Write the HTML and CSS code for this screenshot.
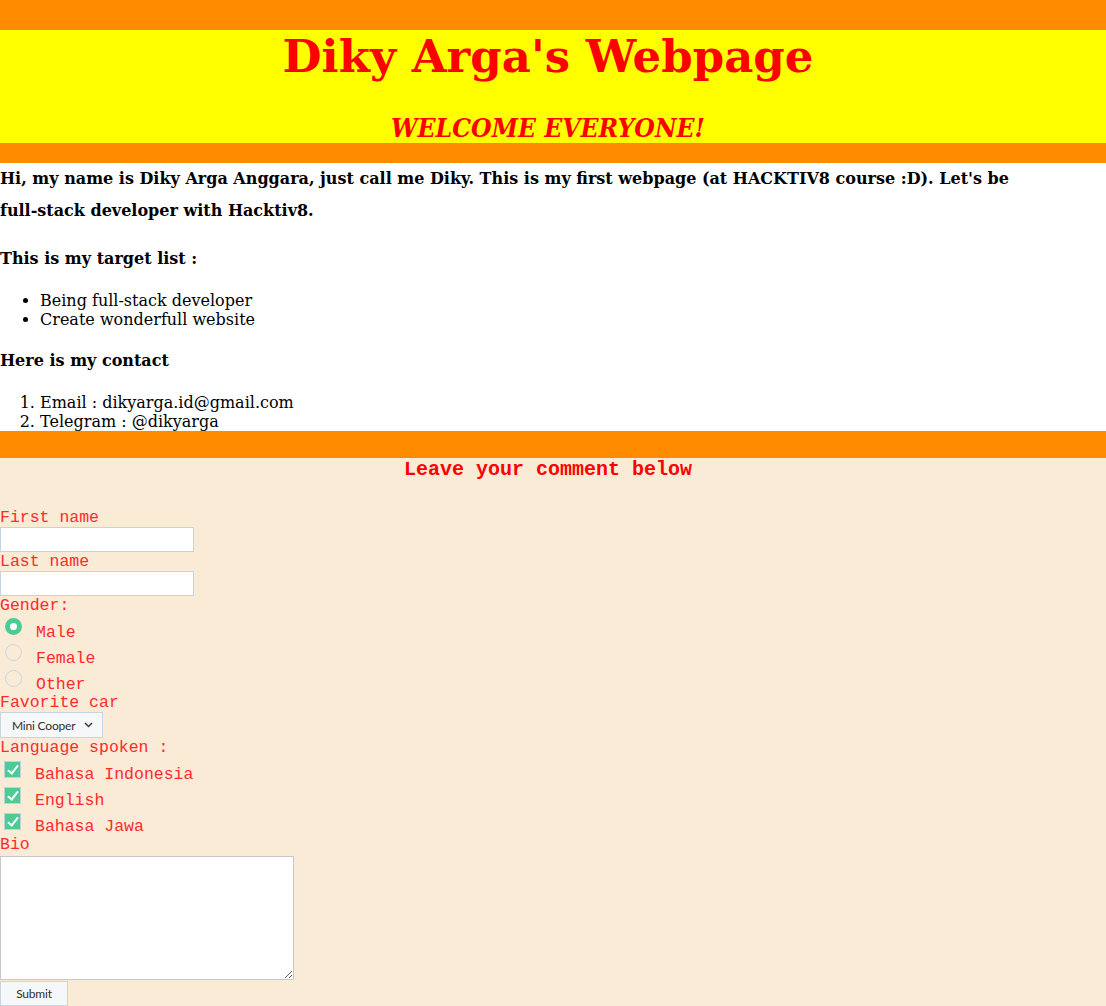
FILE: index.html
```html
<!DOCTYPE html>
<html lang="en">
<head>
<meta charset="utf-8">
<title>Diky Arga's Webpage</title>
<link rel="stylesheet" href="styles.css">
</head>
<body>
<header class="banner">
  <h1 class="title">Diky Arga's Webpage</h1>
  <h2 class="welcome">WELCOME EVERYONE!</h2>
</header>
<main class="about">
  <p class="intro">Hi, my name is Diky Arga Anggara, just call me Diky. This is my first webpage (at HACKTIV8 course :D). Let's be full-stack developer with Hacktiv8.</p>
  <h3 class="sub">This is my target list :</h3>
  <ul class="list">
    <li>Being full-stack developer</li>
    <li>Create wonderfull website</li>
  </ul>
  <h3 class="sub">Here is my contact</h3>
  <ol class="list last">
    <li>Email : dikyarga.id@gmail.com</li>
    <li>Telegram : @dikyarga</li>
  </ol>
</main>
<section class="comment">
  <h2 class="comment-title">Leave your comment below</h2>
  <form class="form">
    <label class="lbl" for="fname">First name</label>
    <input class="text" type="text" id="fname">
    <label class="lbl" for="lname">Last name</label>
    <input class="text" type="text" id="lname">
    <div class="lbl">Gender:</div>
    <label class="opt"><input class="radio" type="radio" name="g" checked><span class="opt-text">Male</span></label>
    <label class="opt"><input class="radio" type="radio" name="g"><span class="opt-text">Female</span></label>
    <label class="opt"><input class="radio" type="radio" name="g"><span class="opt-text">Other</span></label>
    <label class="lbl" for="car">Favorite car</label>
    <span class="select-wrap">
      <select class="select" id="car"><option>Mini Cooper</option></select>
      <svg class="chev" width="9" height="6" viewBox="0 0 9 6"><path d="M1 1 L4.5 4.5 L8 1" fill="none" stroke="#3a3a3a" stroke-width="1.5"/></svg>
    </span>
    <div class="lbl">Language spoken :</div>
    <label class="opt"><input class="check" type="checkbox" checked><span class="opt-text">Bahasa Indonesia</span></label>
    <label class="opt"><input class="check" type="checkbox" checked><span class="opt-text">English</span></label>
    <label class="opt"><input class="check" type="checkbox" checked><span class="opt-text">Bahasa Jawa</span></label>
    <label class="lbl" for="bio">Bio</label>
    <textarea class="bio" id="bio"></textarea>
    <button class="submit" type="button">Submit</button>
  </form>
</section>
</body>
</html>
```
FILE: styles.css
```css
html, body {
  margin: 0;
  padding: 0;
}
body {
  font-family: "DejaVu Serif", serif;
  font-size: 16px;
  color: #000;
  background: #faebd7;
}
.banner {
  background: #ffff00;
  border-top: 30px solid #ff8c00;
  border-bottom: 20px solid #ff8c00;
  padding: 1px 10px 0 0;
  text-align: center;
  color: #ff0000;
}
.title {
  margin: 0;
  font-size: 45px;
  line-height: 52px;
  font-weight: bold;
}
.welcome {
  margin: 30px 0 0;
  font-size: 26.3px;
  line-height: 30px;
  font-weight: bold;
  font-style: italic;
  font-stretch: condensed;
}
.about {
  background: #fff;
}
.intro {
  margin: 0 0 16px;
  max-width: 1022px;
  font-weight: bold;
  line-height: 32px;
}
.sub {
  margin: 0 0 16px;
  font-size: 16px;
  line-height: 32px;
}
.list {
  margin: 0 0 16px;
  padding-left: 40px;
  line-height: 19px;
}
.list.last {
  margin-bottom: 0;
}
.comment {
  border-top: 27px solid #ff8c00;
  background: #faebd7;
  font-family: "Courier New", "Nimbus Mono PS", "FreeMono", "Liberation Mono", monospace;
  color: #ff0000;
  min-height: 560px;
}
.comment-title {
  margin: 0 0 27px;
  padding-right: 10px;
  text-align: center;
  font-size: 20px;
  line-height: 23px;
  font-weight: bold;
}
.form {
  display: flex;
  flex-direction: column;
  align-items: flex-start;
}
.lbl {
  display: block;
  padding-top: 1px;
  line-height: 18px;
  font-size: 16.5px;
  color: #ff2a2a;
}
.text {
  display: block;
  box-sizing: border-box;
  width: 194px;
  height: 25px;
  margin: 0;
  border: 1px solid #c3d5df;
  background: #fff;
  padding: 0 4px;
}
.opt {
  display: flex;
  align-items: flex-start;
  height: 26px;
}
.opt-text {
  padding-top: 9px;
  margin-left: 14px;
  line-height: 17px;
  font-size: 16.5px;
  color: #ff2a2a;
}
.radio {
  appearance: none;
  -webkit-appearance: none;
  box-sizing: border-box;
  width: 17px;
  height: 17px;
  margin: 3px 0 0 5px;
  border: 1px solid #c8d9e2;
  border-radius: 50%;
  background: transparent;
}
.radio:checked {
  border: 5px solid #4ecb95;
  background: #fff;
}
.check {
  appearance: none;
  -webkit-appearance: none;
  position: relative;
  box-sizing: border-box;
  width: 17px;
  height: 17px;
  margin: 4px 0 0 4px;
  border: 1px solid #bcd4d8;
  background: transparent;
}
.check:checked {
  background: #4ecb95;
}
.check:checked::after {
  content: "";
  position: absolute;
  left: 5px;
  top: 1px;
  width: 4px;
  height: 9px;
  border-right: 2px solid #fff;
  border-bottom: 2px solid #fff;
  transform: rotate(38deg);
}
.select-wrap {
  position: relative;
  display: block;
  width: 103px;
  height: 26px;
}
.select {
  appearance: none;
  -webkit-appearance: none;
  box-sizing: border-box;
  width: 103px;
  height: 26px;
  margin: 0;
  padding: 0 0 0 11px;
  border: 1px solid #c6d6e0;
  border-radius: 0;
  background: #f6f7f8;
  font-family: Lato, "Noto Sans", sans-serif;
  font-size: 12px;
  letter-spacing: -0.2px;
  color: #2f2f2f;
}
.chev {
  position: absolute;
  left: 84px;
  top: 10px;
  pointer-events: none;
}
.bio {
  display: block;
  box-sizing: border-box;
  width: 294px;
  height: 124px;
  margin: 2px 0 0;
  border: 1px solid #c8c8c8;
  background: #fff;
  resize: both;
}
.submit {
  display: block;
  box-sizing: border-box;
  width: 68px;
  height: 25px;
  margin: 1px 0 0;
  padding: 0;
  border: 1px solid #c6d6e0;
  border-radius: 0;
  background: #f6f7f8;
  font-family: Lato, "Noto Sans", sans-serif;
  font-size: 12px;
  letter-spacing: -0.2px;
  color: #2f2f2f;
}
```
